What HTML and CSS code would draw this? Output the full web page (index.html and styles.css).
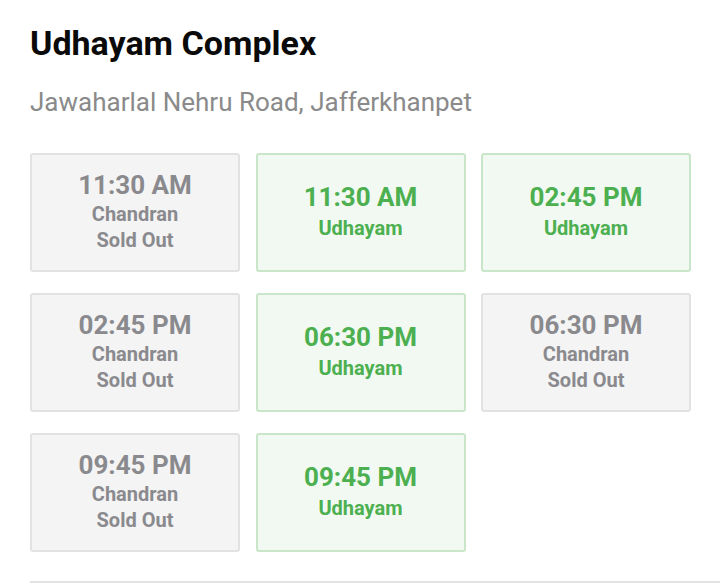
FILE: index.html
```html
<!DOCTYPE html>
<html>
<head>
<meta charset="utf-8">
<link rel="stylesheet" href="styles.css">
</head>
<body>
<div class="page">
  <h1 class="title">Udhayam Complex</h1>
  <p class="address">Jawaharlal Nehru Road, Jafferkhanpet</p>
  <div class="grid">
    <div class="show sold"><div class="time">11:30 AM</div><div class="line">Chandran</div><div class="line">Sold Out</div></div>
    <div class="show open"><div class="time">11:30 AM</div><div class="line">Udhayam</div></div>
    <div class="show open"><div class="time">02:45 PM</div><div class="line">Udhayam</div></div>
    <div class="show sold"><div class="time">02:45 PM</div><div class="line">Chandran</div><div class="line">Sold Out</div></div>
    <div class="show open"><div class="time">06:30 PM</div><div class="line">Udhayam</div></div>
    <div class="show sold"><div class="time">06:30 PM</div><div class="line">Chandran</div><div class="line">Sold Out</div></div>
    <div class="show sold"><div class="time">09:45 PM</div><div class="line">Chandran</div><div class="line">Sold Out</div></div>
    <div class="show open"><div class="time">09:45 PM</div><div class="line">Udhayam</div></div>
  </div>
  <div class="divider"></div>
</div>
</body>
</html>
```
FILE: styles.css
```css
html, body {
  margin: 0;
  padding: 0;
  background: #ffffff;
}
body {
  font-family: Roboto, "Liberation Sans", sans-serif;
}
.page {
  padding: 23px 0 0 30px;
}
.title {
  margin: 0;
  font-size: 34px;
  font-weight: 700;
  line-height: 40px;
  color: #0a0a0a;
}
.address {
  margin: 24px 0 0 0;
  font-size: 26px;
  line-height: 30px;
  color: #8a8a8a;
}
.grid {
  margin-top: 36px;
  display: grid;
  grid-template-columns: 210px 210px 210px;
  column-gap: 15.5px;
  row-gap: 21px;
}
.show {
  box-sizing: border-box;
  height: 119px;
  padding-bottom: 2px;
  border-radius: 3px;
  display: flex;
  flex-direction: column;
  justify-content: center;
  align-items: center;
  text-align: center;
  font-weight: 700;
}
.sold {
  background: #f4f4f4;
  border: 2px solid #e2e2e2;
  color: #8a8a8e;
}
.open {
  background: #f2f9f2;
  border: 2px solid #c9e6c9;
  color: #4caf50;
}
.open .time {
  margin: -1px 0 2px 0;
}
.time {
  font-size: 26px;
  line-height: 31px;
}
.line {
  font-size: 20px;
  line-height: 26px;
}
.divider {
  margin-top: 29px;
  height: 2px;
  background: #e2e2e2;
}
```
